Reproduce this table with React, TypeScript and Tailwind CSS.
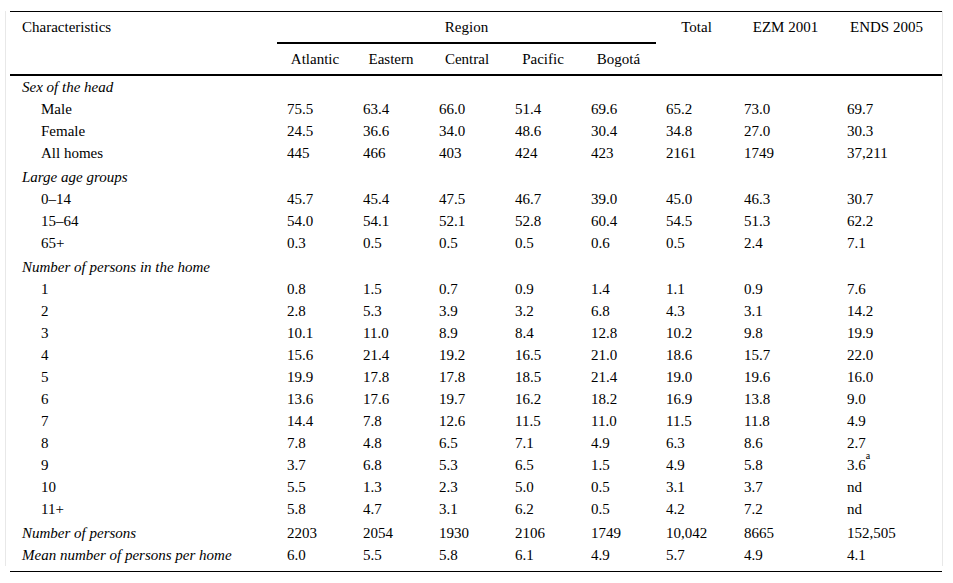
import React from 'react';

type Row =
  | { kind: 'group'; label: string; first?: boolean }
  | { kind: 'data'; label: string; values: React.ReactNode[] }
  | { kind: 'total'; label: string; values: React.ReactNode[] };

const cols = 'grid grid-cols-[267px_76px_76px_76px_76px_75px_78px_103px_105px]';

const rows: Row[] = [
  { kind: 'group', label: 'Sex of the head', first: true },
  { kind: 'data', label: 'Male', values: ['75.5', '63.4', '66.0', '51.4', '69.6', '65.2', '73.0', '69.7'] },
  { kind: 'data', label: 'Female', values: ['24.5', '36.6', '34.0', '48.6', '30.4', '34.8', '27.0', '30.3'] },
  { kind: 'data', label: 'All homes', values: ['445', '466', '403', '424', '423', '2161', '1749', '37,211'] },
  { kind: 'group', label: 'Large age groups' },
  { kind: 'data', label: '0–14', values: ['45.7', '45.4', '47.5', '46.7', '39.0', '45.0', '46.3', '30.7'] },
  { kind: 'data', label: '15–64', values: ['54.0', '54.1', '52.1', '52.8', '60.4', '54.5', '51.3', '62.2'] },
  { kind: 'data', label: '65+', values: ['0.3', '0.5', '0.5', '0.5', '0.6', '0.5', '2.4', '7.1'] },
  { kind: 'group', label: 'Number of persons in the home' },
  { kind: 'data', label: '1', values: ['0.8', '1.5', '0.7', '0.9', '1.4', '1.1', '0.9', '7.6'] },
  { kind: 'data', label: '2', values: ['2.8', '5.3', '3.9', '3.2', '6.8', '4.3', '3.1', '14.2'] },
  { kind: 'data', label: '3', values: ['10.1', '11.0', '8.9', '8.4', '12.8', '10.2', '9.8', '19.9'] },
  { kind: 'data', label: '4', values: ['15.6', '21.4', '19.2', '16.5', '21.0', '18.6', '15.7', '22.0'] },
  { kind: 'data', label: '5', values: ['19.9', '17.8', '17.8', '18.5', '21.4', '19.0', '19.6', '16.0'] },
  { kind: 'data', label: '6', values: ['13.6', '17.6', '19.7', '16.2', '18.2', '16.9', '13.8', '9.0'] },
  { kind: 'data', label: '7', values: ['14.4', '7.8', '12.6', '11.5', '11.0', '11.5', '11.8', '4.9'] },
  { kind: 'data', label: '8', values: ['7.8', '4.8', '6.5', '7.1', '4.9', '6.3', '8.6', '2.7'] },
  {
    kind: 'data',
    label: '9',
    values: [
      '3.7', '6.8', '5.3', '6.5', '1.5', '4.9', '5.8',
      <>3.6<sup className="text-[10px] align-super leading-none">a</sup></>,
    ],
  },
  { kind: 'data', label: '10', values: ['5.5', '1.3', '2.3', '5.0', '0.5', '3.1', '3.7', 'nd'] },
  { kind: 'data', label: '11+', values: ['5.8', '4.7', '3.1', '6.2', '0.5', '4.2', '7.2', 'nd'] },
  { kind: 'total', label: 'Number of persons', values: ['2203', '2054', '1930', '2106', '1749', '10,042', '8665', '152,505'] },
  { kind: 'total', label: 'Mean number of persons per home', values: ['6.0', '5.5', '5.8', '6.1', '4.9', '5.7', '4.9', '4.1'] },
];

const regions = ['Atlantic', 'Eastern', 'Central', 'Pacific', 'Bogotá'];

export default function App() {
  return (
    <div className="w-[953px] h-[583px] bg-white pt-[11px] font-['Liberation_Serif','Times_New_Roman',serif] text-[15px] text-black">
      <div className="ml-[5px] w-[938px] border-x border-[#e8e8e8]">
        <div className="ml-[4px] w-[932px] border-t border-black">
          {/* header */}
          <div className={`${cols} grid-rows-[32px_30px] border-b-2 border-black leading-[20px]`}>
            <div className="pl-[12px] pt-[5px]">Characteristics</div>
            <div className="col-span-5 border-b-2 border-black pt-[5px] text-center">Region</div>
            <div className="pt-[5px] pl-[3px] text-center">Total</div>
            <div className="pt-[5px] text-center">EZM 2001</div>
            <div className="pt-[5px] pr-[6px] text-center">ENDS 2005</div>
            <div />
            {regions.map((r) => (
              <div key={r} className="pt-[5px] text-center">
                {r}
              </div>
            ))}
            <div />
            <div />
            <div />
          </div>

          {/* body */}
          {rows.map((row, i) => {
            if (row.kind === 'group') {
              return (
                <div
                  key={i}
                  className={`${cols} italic ${row.first ? 'h-[22px] leading-[22px]' : 'h-[24px] pt-[2px] leading-[22px]'}`}
                >
                  <div className="col-span-9 pl-[12px]">{row.label}</div>
                </div>
              );
            }
            const isTotal = row.kind === 'total';
            return (
              <div
                key={i}
                className={`${cols} ${
                  isTotal && row.label === 'Number of persons' ? 'h-[24px] pt-[2px]' : 'h-[22px]'
                } leading-[22px]`}
              >
                <div className={isTotal ? 'pl-[12px] italic' : 'pl-[31px]'}>{row.label}</div>
                {row.values.map((v, j) => (
                  <div key={j} className="pl-[10px] whitespace-nowrap">
                    {v}
                  </div>
                ))}
              </div>
            );
          })}
        </div>
      </div>
      <div className="mt-[5px] ml-[10px] w-[932px] border-t border-black" />
    </div>
  );
}
